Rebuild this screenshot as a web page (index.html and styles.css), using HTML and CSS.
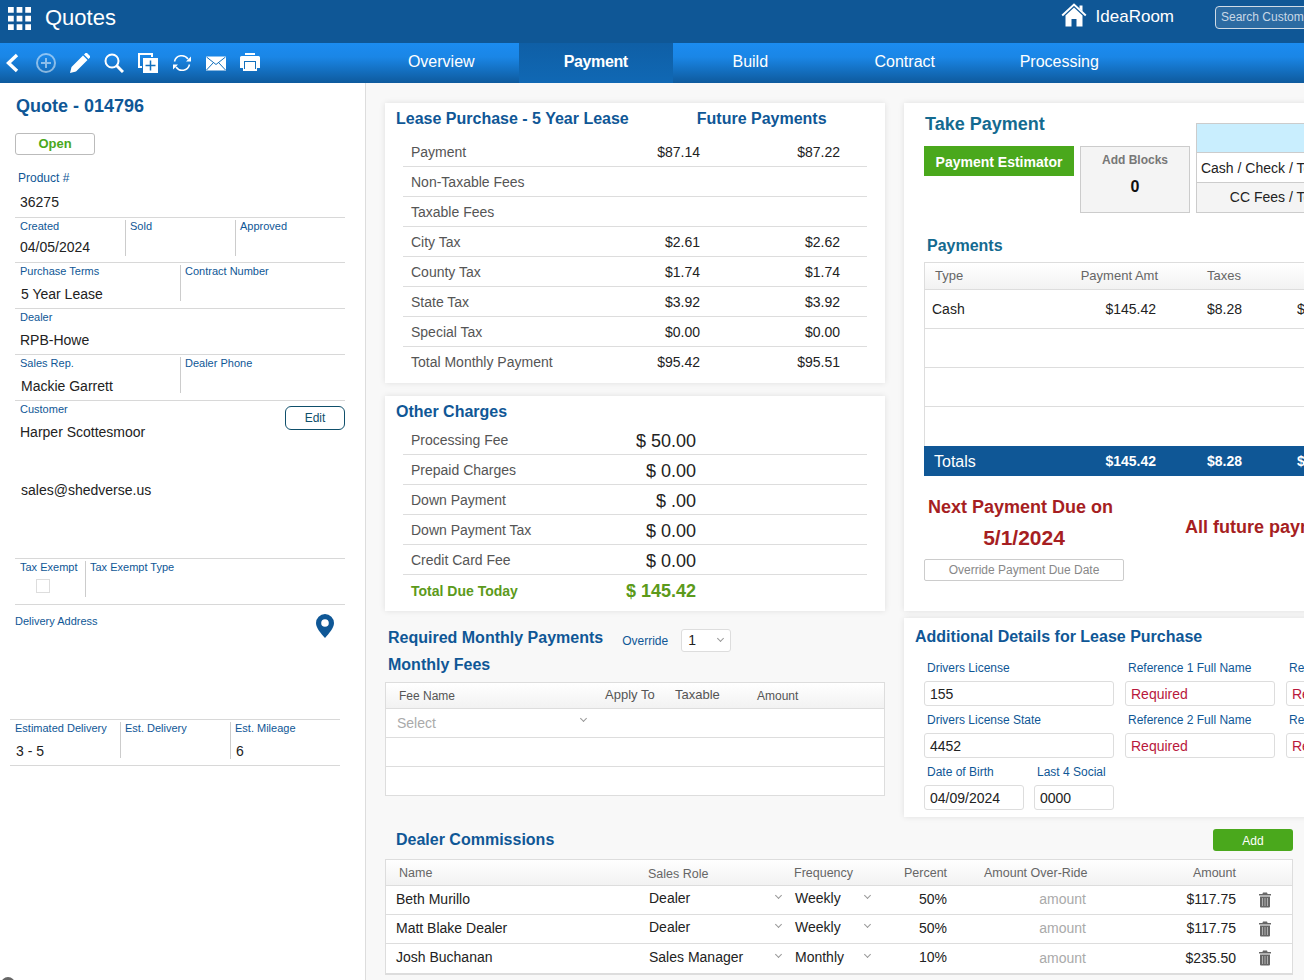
FILE: index.html
```html
<!DOCTYPE html>
<html lang="en">
<head>
<meta charset="utf-8">
<title>Quotes</title>
<link rel="stylesheet" href="styles.css">
</head>
<body>
<div class="page">
  <header class="topbar">
    <svg class="apps" width="24" height="24" viewBox="0 0 24 24"><path fill="#fff" d="M0 0h6v6H0zM9 0h6v6H9zM18 0h6v6h-6zM0 9h6v6H0zM9 9h6v6H9zM18 9h6v6h-6zM0 18h6v6H0zM9 18h6v6H9zM18 18h6v6h-6z"/></svg>
    <span class="app-title">Quotes</span>
    <svg class="house" width="26" height="24" viewBox="0 0 26 24"><path fill="none" stroke="#fff" stroke-width="2" d="M1.2 12.5 13 1.6l11.8 10.9"/><path fill="#fff" d="M4.5 12.5 13 4.6l8.500 7.900V23.500h-6V16h-5v7.500h-6z"/><path fill="#fff" d="M18.500 2.500h3v6l-3-2.800z"/></svg>
    <span class="brand">IdeaRoom</span>
    <div class="search">Search Customers</div>
  </header>

  <nav class="toolbar">
    <div class="tools">
      <svg class="tool tool-back" width="14" height="20" viewBox="0 0 14 20"><path fill="none" stroke="#fff" stroke-width="3.4" d="M12 2 3.500 10 12 18"/></svg>
      <svg class="tool" width="20" height="20" viewBox="0 0 20 20"><g fill="none" stroke="#fff" stroke-opacity=".5" stroke-width="2"><circle cx="10" cy="10" r="9"/><path d="M10 5v10M5 10h10"/></g></svg>
      <svg class="tool" width="20" height="20" viewBox="0 0 20 20"><path fill="#fff" d="M0 20l1.500-6L13 2.500l4.500 4.500L6 18.500zM14 1.500 15.500 0a1.500 1.500 0 0 1 1.500 0l3 3a1.500 1.500 0 0 1 0 1.500L18.500 6z"/></svg>
      <svg class="tool" width="20" height="20" viewBox="0 0 20 20"><g fill="none" stroke="#fff"><circle cx="8" cy="8" r="6.500" stroke-width="2"/><path stroke-width="3" d="M12.500 12.500 19 19"/></g></svg>
      <svg class="tool" width="20" height="20" viewBox="0 0 20 20"><path fill="none" stroke="#fff" stroke-width="2" d="M4 14H1V1h13v3"/><path fill="#fff" d="M5 5h15v15H5z"/><path fill="none" stroke="#1270bd" stroke-width="1.500" d="M12.500 7.500v10M7.500 12.500h10"/></svg>
      <svg class="tool" width="20" height="20" viewBox="0 0 20 20"><g fill="none" stroke="#fff" stroke-width="1.500"><path d="M2.500 8.500A7.500 7.500 0 0 1 16 6"/><path d="M17.500 11.500A7.500 7.500 0 0 1 4 14"/></g><path fill="#fff" d="M19 3.500v5h-5zM1 16.500v-5h5z"/></svg>
      <svg class="tool" width="20" height="20" viewBox="0 0 20 20"><path fill="#fff" d="M0 3.500h20v14H0z"/><path fill="none" stroke="#1270bd" d="M.5 4 10 11.500 19.500 4M.5 17l7-7.500M19.500 17l-7-7.500"/></svg>
      <svg class="tool" width="20" height="20" viewBox="0 0 20 20"><path fill="#fff" d="M5 0h10v2H5zM1.500 3h17A1.500 1.500 0 0 1 20 4.500V15h-3v3H3v-3H0V4.500A1.500 1.500 0 0 1 1.500 3z"/><path fill="#1270bd" d="M4 8h12v8H4z"/><path fill="#fff" d="M5 9h10v9H5z"/></svg>
    </div>
    <div class="tabs">
      <a class="tab">Overview</a>
      <a class="tab tab-active">Payment</a>
      <a class="tab">Build</a>
      <a class="tab">Contract</a>
      <a class="tab">Processing</a>
    </div>
  </nav>

  <div class="content">
    <aside class="sidebar">
      <h1 class="quote-title">Quote - 014796</h1>
      <div class="status">Open</div>

      <div class="srow srow-product">
        <div class="cell"><div class="lbl lbl-product">Product #</div><div class="val">36275</div></div>
      </div>
      <div class="srow srow-created">
        <div class="cell c-110"><div class="lbl">Created</div><div class="val val-date">04/05/2024</div></div>
        <div class="cell c-110 divided"><div class="lbl">Sold</div></div>
        <div class="cell divided"><div class="lbl">Approved</div></div>
      </div>
      <div class="srow srow-46">
        <div class="cell c-165"><div class="lbl">Purchase Terms</div><div class="val val-off">5 Year Lease</div></div>
        <div class="cell divided"><div class="lbl">Contract Number</div></div>
      </div>
      <div class="srow srow-46">
        <div class="cell"><div class="lbl">Dealer</div><div class="val">RPB-Howe</div></div>
      </div>
      <div class="srow srow-46">
        <div class="cell c-165"><div class="lbl">Sales Rep.</div><div class="val val-off">Mackie Garrett</div></div>
        <div class="cell divided"><div class="lbl">Dealer Phone</div></div>
      </div>
      <div class="srow srow-customer">
        <div class="customer">
          <div class="lbl">Customer</div>
          <div class="val">Harper Scottesmoor</div>
          <div class="val val-off email">sales@shedverse.us</div>
        </div>
        <button class="edit">Edit</button>
      </div>
      <div class="srow srow-46">
        <div class="cell c-70"><div class="lbl">Tax Exempt</div><span class="check"></span></div>
        <div class="cell divided"><div class="lbl">Tax Exempt Type</div></div>
      </div>
      <div class="delivery">
        <div class="lbl">Delivery Address</div>
        <svg class="pin" width="18" height="24" viewBox="0 0 18 24"><path fill="#0f5796" fill-rule="evenodd" d="M9 0a9 9 0 0 1 9 9c0 5-5 10.500-9 15C5 19.500 0 14 0 9a9 9 0 0 1 9-9zm0 5.200a3.800 3.800 0 1 0 0 7.600 3.800 3.800 0 0 0 0-7.600z"/></svg>
      </div>
      <div class="srow srow-est">
        <div class="cell c-110"><div class="lbl">Estimated Delivery</div><div class="val val-est">3 - 5</div></div>
        <div class="cell c-110 divided"><div class="lbl">Est. Delivery</div></div>
        <div class="cell divided"><div class="lbl">Est. Mileage</div><div class="val val-est">6</div></div>
      </div>
    </aside>

    <main class="main">
      <div class="columns">
        <div class="col-left">
          <section class="card card-lease">
            <div class="card-head">
              <h2 class="h-blue">Lease Purchase - 5 Year Lease</h2>
              <h2 class="h-blue h-future">Future Payments</h2>
            </div>
            <div class="lrow"><span class="llabel">Payment</span><span>$87.14</span><span>$87.22</span></div>
            <div class="lrow"><span class="llabel">Non-Taxable Fees</span><span></span><span></span></div>
            <div class="lrow"><span class="llabel">Taxable Fees</span><span></span><span></span></div>
            <div class="lrow"><span class="llabel">City Tax</span><span>$2.61</span><span>$2.62</span></div>
            <div class="lrow"><span class="llabel">County Tax</span><span>$1.74</span><span>$1.74</span></div>
            <div class="lrow"><span class="llabel">State Tax</span><span>$3.92</span><span>$3.92</span></div>
            <div class="lrow"><span class="llabel">Special Tax</span><span>$0.00</span><span>$0.00</span></div>
            <div class="lrow lrow-last"><span class="llabel">Total Monthly Payment</span><span>$95.42</span><span>$95.51</span></div>
          </section>

          <section class="card card-other">
            <h2 class="h-blue h-other">Other Charges</h2>
            <div class="orow"><span class="llabel">Processing Fee</span><span class="oval">$ 50.00</span></div>
            <div class="orow"><span class="llabel">Prepaid Charges</span><span class="oval">$ 0.00</span></div>
            <div class="orow"><span class="llabel">Down Payment</span><span class="oval">$ .00</span></div>
            <div class="orow"><span class="llabel">Down Payment Tax</span><span class="oval">$ 0.00</span></div>
            <div class="orow"><span class="llabel">Credit Card Fee</span><span class="oval">$ 0.00</span></div>
            <div class="orow orow-total"><span class="llabel">Total Due Today</span><span class="oval">$ 145.42</span></div>
          </section>

          <div class="monthly">
            <div class="monthly-top">
              <h2 class="h-blue h-required">Required Monthly Payments</h2>
              <span class="override-lbl">Override</span>
              <div class="mini-select">1<i class="chev"></i></div>
            </div>
            <h2 class="h-blue h-fees">Monthly Fees</h2>
            <div class="fees">
              <div class="fees-head">
                <span class="fh-name">Fee Name</span>
                <span class="fh-apply">Apply To</span>
                <span class="fh-tax">Taxable</span>
                <span class="fh-amt">Amount</span>
              </div>
              <div class="fees-row"><span class="fee-select">Select<i class="chev"></i></span></div>
              <div class="fees-row"></div>
              <div class="fees-row fees-row-last"></div>
            </div>
          </div>
        </div>

        <div class="col-right">
          <section class="card card-take">
            <div class="take-top">
              <div class="take-left">
                <h2 class="h-teal h-take">Take Payment</h2>
                <button class="estimator">Payment Estimator</button>
              </div>
              <div class="blocks">
                <div class="blocks-lbl">Add Blocks</div>
                <div class="blocks-val">0</div>
              </div>
              <div class="totals-box">
                <div class="tb-head"></div>
                <div class="tb-row">Cash / Check / Total</div>
                <div class="tb-row tb-grey">CC Fees / Total</div>
              </div>
            </div>

            <h2 class="h-teal h-payments">Payments</h2>
            <div class="ptable">
              <div class="prow phead"><span class="p-type">Type</span><span class="p-amt">Payment Amt</span><span class="p-tax">Taxes</span><span></span></div>
              <div class="prow pbody"><span>Cash</span><span class="p-amt p-amt-v">$145.42</span><span class="p-tax">$8.28</span><span>$145.42</span></div>
              <div class="prow pbody"></div>
              <div class="prow pbody"></div>
              <div class="prow pbody pbody-last"></div>
              <div class="prow ptotal"><span class="p-totals">Totals</span><span class="p-amt p-amt-v">$145.42</span><span class="p-tax">$8.28</span><span>$145.42</span></div>
            </div>

            <div class="due">
              <div class="due-left">
                <div class="due-text">Next Payment Due on</div>
                <div class="due-date">5/1/2024</div>
                <button class="due-btn">Override Payment Due Date</button>
              </div>
              <div class="due-future">All future payments</div>
            </div>
          </section>

          <section class="card card-details">
            <h2 class="h-blue h-details">Additional Details for Lease Purchase</h2>
            <div class="dgrid">
              <div class="dcol dcol-1">
                <label class="field"><span class="flabel">Drivers License</span><span class="input">155</span></label>
                <label class="field"><span class="flabel">Drivers License State</span><span class="input">4452</span></label>
                <div class="dpair">
                  <label class="field field-dob"><span class="flabel">Date of Birth</span><span class="input">04/09/2024</span></label>
                  <label class="field field-ssn"><span class="flabel">Last 4 Social</span><span class="input">0000</span></label>
                </div>
              </div>
              <div class="dcol dcol-2">
                <label class="field"><span class="flabel">Reference 1 Full Name</span><span class="input input-req">Required</span></label>
                <label class="field"><span class="flabel">Reference 2 Full Name</span><span class="input input-req">Required</span></label>
              </div>
              <div class="dcol dcol-3">
                <label class="field"><span class="flabel">Reference 1 Phone</span><span class="input input-req">Required</span></label>
                <label class="field"><span class="flabel">Reference 2 Phone</span><span class="input input-req">Required</span></label>
              </div>
            </div>
          </section>
        </div>
      </div>

      <section class="commissions">
        <div class="comm-top">
          <h2 class="h-blue">Dealer Commissions</h2>
          <button class="add">Add</button>
        </div>
        <div class="ctable">
          <div class="crow chead">
            <span class="ch-name">Name</span>
            <span class="ch-role">Sales Role</span>
            <span>Frequency</span>
            <span>Percent</span>
            <span>Amount Over-Ride</span>
            <span class="c-right">Amount</span>
            <span></span>
          </div>
          <div class="crow cbody">
            <span class="c-name">Beth Murillo</span>
            <span class="c-sel">Dealer<i class="chev"></i></span>
            <span class="c-sel c-sel-f">Weekly<i class="chev"></i></span>
            <span class="c-pct">50%</span>
            <span class="c-over">amount</span>
            <span class="c-right c-money">$117.75</span>
            <svg class="trash" width="12" height="16" viewBox="0 0 12 15"><path fill="#666" d="M4 0h4l.6 1.500H12V3H0V1.500h3.400zM1 4h10v10a1 1 0 0 1-1 1H2a1 1 0 0 1-1-1z"/><path stroke="#fff" stroke-opacity=".6" stroke-width=".8" d="M3.500 5.500v8M6 5.500v8M8.500 5.500v8"/></svg>
          </div>
          <div class="crow cbody">
            <span class="c-name">Matt Blake Dealer</span>
            <span class="c-sel">Dealer<i class="chev"></i></span>
            <span class="c-sel c-sel-f">Weekly<i class="chev"></i></span>
            <span class="c-pct">50%</span>
            <span class="c-over">amount</span>
            <span class="c-right c-money">$117.75</span>
            <svg class="trash" width="12" height="16" viewBox="0 0 12 15"><path fill="#666" d="M4 0h4l.6 1.500H12V3H0V1.500h3.400zM1 4h10v10a1 1 0 0 1-1 1H2a1 1 0 0 1-1-1z"/><path stroke="#fff" stroke-opacity=".6" stroke-width=".8" d="M3.500 5.500v8M6 5.500v8M8.500 5.500v8"/></svg>
          </div>
          <div class="crow cbody cbody-last">
            <span class="c-name">Josh Buchanan</span>
            <span class="c-sel">Sales Manager<i class="chev"></i></span>
            <span class="c-sel c-sel-f">Monthly<i class="chev"></i></span>
            <span class="c-pct">10%</span>
            <span class="c-over">amount</span>
            <span class="c-right c-money">$235.50</span>
            <svg class="trash" width="12" height="16" viewBox="0 0 12 15"><path fill="#666" d="M4 0h4l.6 1.500H12V3H0V1.500h3.400zM1 4h10v10a1 1 0 0 1-1 1H2a1 1 0 0 1-1-1z"/><path stroke="#fff" stroke-opacity=".6" stroke-width=".8" d="M3.500 5.500v8M6 5.500v8M8.500 5.500v8"/></svg>
          </div>
        </div>
      </section>
    </main>
  </div>
  <span class="help-dot"></span>
</div>
</body>
</html>
```

FILE: styles.css
```css
* { box-sizing: border-box; }
html, body { margin: 0; padding: 0; height: 100%; overflow: hidden; }
body { font-family: "Liberation Sans", Arial, sans-serif; font-size: 14px; color: #222; background: #f8f8f8; }
h1, h2 { margin: 0; }
button { font-family: inherit; cursor: pointer; }

.page { position: relative; width: 1304px; height: 980px; overflow: hidden; }

/* header */
.topbar { height: 43px; background: #0f5796; display: flex; align-items: center; color: #fff; overflow: hidden; }
.apps { margin-left: 8px; margin-top: -7px; width: 23px; height: 23px; flex: none; }
.app-title { margin-left: 14px; font-size: 22px; line-height: 36px; margin-top: -7px; }
.house { margin-left: auto; flex: none; margin-top: -13px; }
.brand { margin-left: 9px; font-size: 17px; margin-top: -10px; }
.search { flex: none; width: 130px; height: 23px; margin-left: 41px; margin-right: -41px; margin-top: -9px; border: 1px solid #cfdbe6; border-radius: 4px; background: rgba(255,255,255,.12); color: #c9d8e6; font-size: 12px; line-height: 21px; padding-left: 5px; white-space: nowrap; overflow: hidden; }

/* toolbar */
.toolbar { height: 40px; display: flex; background: linear-gradient(#1b8cf1, #1a86e6 35%, #0e5a9d); }
.tools { width: 364px; flex: none; display: flex; align-items: center; padding-left: 36px; gap: 14px; position: relative; }
.tool { flex: none; margin-top: -1px; }
.tool-back { margin-left: -31px; margin-right: 3px; }
.tabs { display: flex; flex: 1; }
.tab { width: 154.500px; text-align: center; color: #fff; font-size: 16px; line-height: 37px; }
.tab-active { background: linear-gradient(#0f5fa6, #1068b4); font-weight: bold; letter-spacing: -.4px; }

/* sidebar */
.content { display: flex; height: 897px; }
.sidebar { width: 366px; flex: none; background: #fff; border-right: 1px solid #ddd; padding: 13px 20px 0 15px; }
.quote-title { font-size: 18px; line-height: 20px; color: #0f5796; padding-left: 1px; }
.status { width: 80px; height: 22px; margin-top: 17px; border: 1px solid #bbb; border-radius: 3px; color: #4aa81c; font-weight: bold; font-size: 13px; line-height: 20px; text-align: center; }
.srow { display: flex; border-bottom: 1px solid #d8d8d8; align-items: flex-start; }
.srow-product { height: 63px; padding-top: 17px; }
.srow-created { height: 45px; }
.srow-46 { height: 46px; }
.srow-customer { height: 158px; justify-content: space-between; padding-top: 5px; }
.srow-est { height: 46px; margin-left: -5px; margin-right: 5px; }
.cell { flex: 1; padding-left: 5px; min-height: 36px; margin-top: 2px; position: relative; }
.c-110 { flex: 0 0 110px; }
.c-165 { flex: 0 0 165px; }
.c-70 { flex: 0 0 70px; }
.divided { border-left: 1px solid #ccc; padding-left: 4px; }
.lbl { font-size: 11px; line-height: 13px; color: #0f5796; }
.srow-product .cell { margin-top: 0; min-height: 0; }
.lbl-product { font-size: 12px; margin-left: -2px; }
.val { font-size: 14px; line-height: 16px; color: #222; margin-top: 8px; }
.srow-product .val { margin-top: 9px; }
.val-date { margin-top: 6px; }
.val-off { margin-left: 1px; }
.customer { padding-left: 5px; }
.customer .lbl { margin-top: -3px; }
.email { margin-top: 42px; }
.edit { width: 60px; height: 24px; background: #fff; border: 1px solid #0f4f6b; border-radius: 6px; color: #0f4f6b; font-size: 12px; padding: 0; }
.check { display: block; width: 14px; height: 14px; border: 1px solid #ddd; margin: 5px 0 0 16px; }
.delivery { height: 115px; display: flex; justify-content: space-between; border-bottom: 1px solid #d8d8d8; padding: 10px 6px 0 0; margin-left: -5px; margin-right: 5px; }
.delivery .lbl { margin-left: 5px; }
.pin { flex: none; margin-top: -1px; }
.val-est { margin-left: 1px; margin-top: 8px; }

/* main */
.main { flex: 1; min-width: 0; padding: 20px 0 0 19px; overflow: hidden; }
.columns { display: flex; gap: 19px; align-items: flex-start; }
.col-left { width: 500px; flex: none; display: flex; flex-direction: column; }
.col-right { width: 420px; flex: none; display: flex; flex-direction: column; gap: 7px; }
.card { background: #fff; box-shadow: 0 0 6px rgba(0,0,0,.1); }
.h-blue { font-size: 16px; line-height: 20px; color: #0f5796; font-weight: bold; }
.h-teal { color: #146a90; font-weight: bold; }

.card-lease { height: 280px; padding: 6px 18px 0 18px; }
.card-head { display: flex; margin-left: -7px; height: 28px; }
.h-future { margin-left: 68px; }
.lrow { display: grid; grid-template-columns: 1fr 70px 140px; height: 30px; padding-right: 27px; align-items: center; border-bottom: 1px solid #ddd; text-align: right; color: #222; }
.lrow-last { border-bottom: 0; }
.llabel { text-align: left; padding-left: 8px; color: #555; }

.card-other { height: 215px; margin-top: 13px; padding: 6px 18px 0 18px; }
.h-other { margin-left: -7px; height: 23px; }
.orow { display: flex; justify-content: space-between; align-items: center; height: 30px; border-bottom: 1px solid #ddd; padding-right: 171px; }
.oval { font-size: 18px; color: #222; margin-top: 4px; }
.orow-total { border-bottom: 0; padding-top: 2px; }
.orow-total .llabel { color: #5c9a1b; font-weight: bold; }
.orow-total .oval { color: #5c9a1b; font-weight: bold; margin-top: 0; }

.monthly { padding-top: 16px; }
.monthly-top { display: flex; align-items: center; padding-left: 3px; height: 24px; }
.h-required { margin-top: -2px; }
.override-lbl { margin-left: 19px; margin-top: 4px; font-size: 12px; color: #0f5796; }
.mini-select { position: relative; width: 50px; height: 23px; margin-left: 13px; margin-top: 2px; background: #fff; border: 1px solid #ddd; border-radius: 3px; padding-left: 6px; line-height: 21px; color: #222; }
.mini-select .chev { right: 7px; top: 6px; }
.h-fees { margin: 4px 0 0 3px; }
.fees { margin-top: 7px; border: 1px solid #ddd; background: #fff; }
.fees-head { position: relative; height: 26px; display: flex; background: linear-gradient(#fff, #f2f2f2); border-bottom: 1px solid #ddd; color: #555; font-size: 12px; line-height: 27px; }
.fh-name { width: 219px; padding-left: 13px; }
.fh-apply { width: 70px; font-size: 13px; line-height: 23px; }
.fh-tax { width: 82px; font-size: 13px; line-height: 23px; }
.fees-row { height: 29px; border-bottom: 1px solid #ddd; line-height: 28px; }
.fees-row-last { border-bottom: 0; height: 28px; }
.fee-select { position: relative; display: block; width: 210px; padding-left: 11px; color: #aaa; }
.fee-select .chev { right: 10px; top: 7px; }
.chev { position: absolute; width: 5px; height: 5px; border-right: 1px solid #999; border-bottom: 1px solid #999; transform: rotate(45deg); display: block; }

/* take payment */
.card-take { height: 508px; padding: 9px 0 0 20px; overflow: hidden; }
.take-top { display: flex; align-items: flex-start; height: 101px; }
.take-left { width: 150px; flex: none; }
.h-take { font-size: 18px; line-height: 24px; padding-left: 1px; }
.estimator { display: block; width: 150px; height: 30px; margin-top: 10px; border: 0; background: #4aa81c; color: #fff; font-weight: bold; font-size: 14px; padding: 2px 0 0; }
.blocks { width: 110px; height: 67px; flex: none; margin: 34px 0 0 6px; background: #f4f4f4; border: 1px solid #ccc; text-align: center; }
.blocks-lbl { font-size: 12px; font-weight: bold; color: #777; line-height: 14px; margin-top: 6px; }
.blocks-val { font-size: 16px; font-weight: bold; line-height: 18px; margin-top: 11px; color: #111; }
.totals-box { width: 135px; flex: none; margin: 11px 0 0 6px; border: 1px solid #ccc; border-right: 0; }
.tb-head { height: 29px; background: #c9eefe; border-bottom: 1px solid #ccc; }
.tb-row { height: 30px; line-height: 31px; white-space: nowrap; padding-right: 5px; text-align: right; border-bottom: 1px solid #ccc; }
.tb-grey { background: #f4f4f4; border-bottom: 0; height: 29px; line-height: 29px; }
.h-payments { font-size: 16px; line-height: 20px; margin-top: 23px; padding-left: 3px; }
.ptable { margin-top: 6px; border-left: 1px solid #ddd; border-top: 1px solid #ddd; }
.prow { display: grid; grid-template-columns: 135px 100px 137px 60px; align-items: center; white-space: nowrap; }
.phead { height: 27px; padding-bottom: 2px; background: linear-gradient(#fff, #f2f2f2); border-bottom: 1px solid #ddd; color: #666; font-size: 13px; }
.p-type { padding-left: 10px; }
.p-amt { text-align: right; margin-right: 2px; justify-self: end; margin-left: -40px; }
.p-amt-v { margin-right: 4px; }
.p-tax { padding-left: 47px; }
.pbody { height: 39px; border-bottom: 1px solid #ddd; }
.pbody span:first-child { padding-left: 7px; }
.pbody-last { border-bottom: 0; }
.ptotal { height: 30px; background: #0f5796; color: #fff; font-weight: bold; margin-left: -1px; padding-left: 1px; }
.p-totals { padding-left: 9px; font-size: 16px; font-weight: normal; margin-top: 2px; }
.due { display: flex; margin-top: 16px; color: #a61e22; font-weight: bold; white-space: nowrap; }
.due-left { width: 200px; flex: none; text-align: center; }
.due-text { font-size: 18px; line-height: 30px; padding-right: 7px; }
.due-date { font-size: 21px; line-height: 31px; }
.due-btn { display: block; width: 200px; height: 22px; margin-top: 6px; background: #fff; border: 1px solid #ccc; border-radius: 2px; color: #888; font-size: 12px; padding: 0; }
.due-future { margin: 20px 0 0 61px; font-size: 18px; line-height: 30px; }

/* details */
.card-details { height: 199px; padding: 9px 0 0 20px; overflow: hidden; }
.h-details { margin-left: -9px; }
.dgrid { display: flex; gap: 11px; margin-top: 14px; align-items: flex-start; }
.dcol { display: flex; flex-direction: column; gap: 7px; flex: none; }
.dcol-1 { width: 190px; }
.dcol-2 { width: 150px; }
.dcol-3 { width: 60px; }
.dpair { display: flex; gap: 10px; }
.field-dob { width: 100px; }
.field-ssn { width: 80px; }
.field { display: block; height: 45px; }
.flabel { display: block; font-size: 12px; line-height: 14px; height: 20px; padding-top: 0; padding-left: 3px; color: #0f5796; white-space: nowrap; }
.input { display: block; height: 25px; border: 1px solid #ddd; border-radius: 3px; padding-left: 5px; line-height: 25px; color: #222; background: #fff; white-space: nowrap; overflow: hidden; }
.input-req { color: #b9183c; }

/* commissions */
.commissions { width: 908px; margin-top: 12px; }
.comm-top { display: flex; justify-content: space-between; align-items: center; padding-left: 11px; height: 22px; }
.add { width: 80px; height: 22px; background: #4aa81c; color: #fff; border: 0; border-radius: 3px; font-size: 12px; padding: 2px 0 0; }
.ctable { margin-top: 8px; border: 1px solid #ddd; border-bottom-width: 2px; background: #fff; }
.crow { display: grid; grid-template-columns: 262px 146px 110px 80px 116px 136px 56px; align-items: center; }
.chead { height: 26px; background: linear-gradient(#fff, #f2f2f2); border-bottom: 1px solid #ddd; color: #666; font-size: 12.500px; }
.ch-name { padding-left: 13px; }
.ch-role { margin-top: 2px; }
.cbody { height: 29px; border-bottom: 1px solid #ddd; }
.cbody-last { border-bottom: 0; }
.c-name { padding-left: 10px; margin-top: -3px; }
.c-sel { position: relative; padding-left: 1px; margin-top: -4px; }
.c-sel .chev { right: 13px; top: 3px; }
.c-sel-f .chev { right: 34px; }
.c-pct { padding-left: 15px; margin-top: -3px; }
.c-over { text-align: right; padding-right: 14px; color: #aaa; margin-top: -2px; }
.c-right { text-align: right; }
.c-money { padding-right: 0; margin-top: -2px; }
.trash { margin-left: 23px; margin-top: -1px; }

.help-dot { position: absolute; left: 1px; top: 977px; width: 14px; height: 14px; border-radius: 50%; background: #666; }
```
